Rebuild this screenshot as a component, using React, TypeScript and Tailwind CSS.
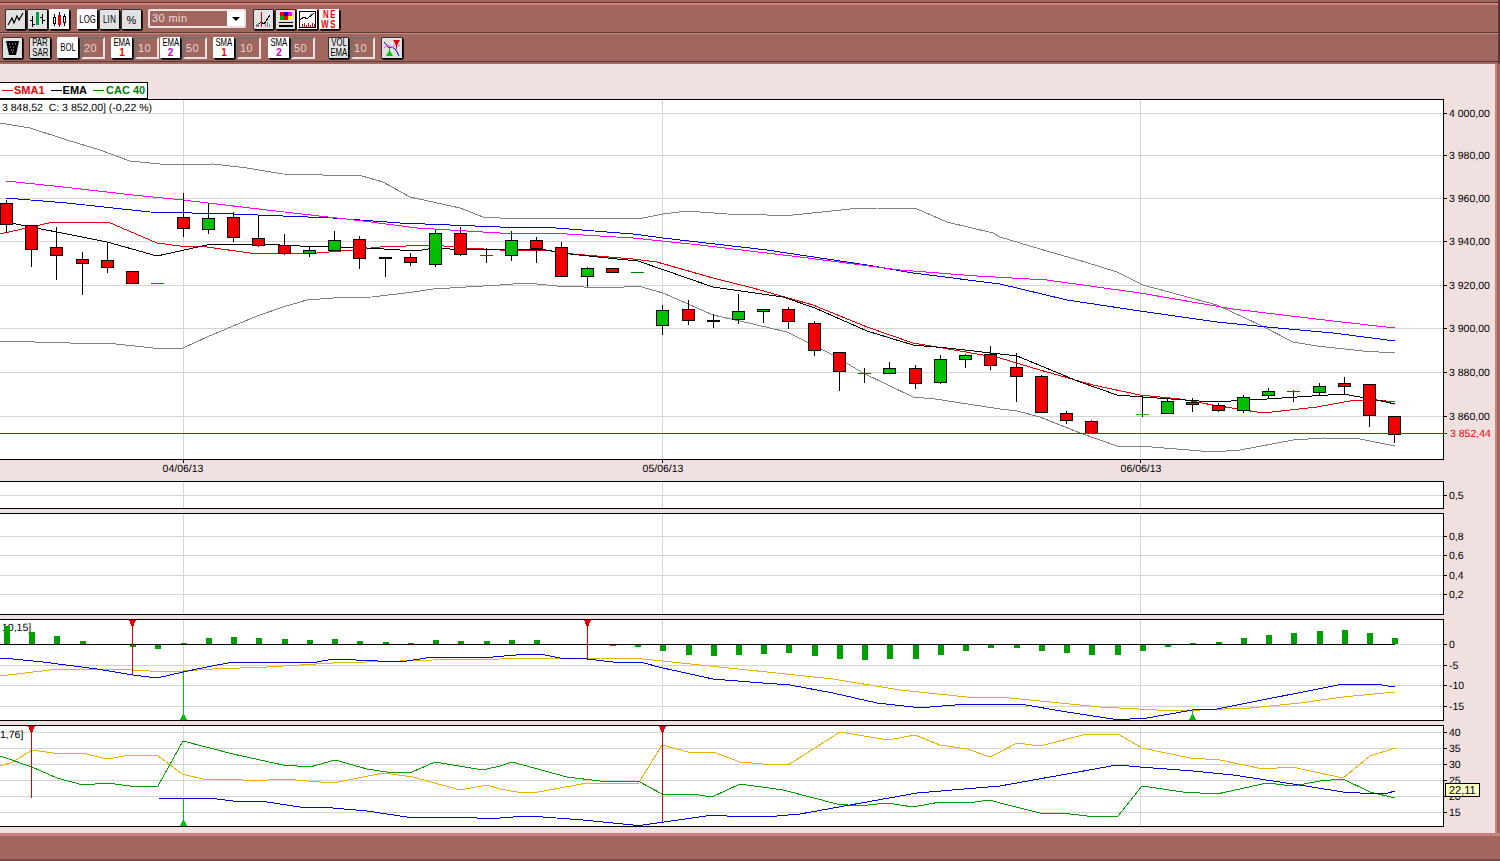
import type { ReactNode } from 'react'

type Pt = [number, number]
// x, wick top, body top, body bottom, wick bottom, colour
type Candle = [number, number, number, number, number, 'r' | 'g']
// x, wick top, level, wick bottom, colour, thickness
type Dash = [number, number, number, number, string, number]

const RED = '#f00000'
const GREEN = '#00c000'
const GRID = '#d4d4d4'
const GRAY = '#808080'
const BLUE = '#0000e0'
const MAGENTA = '#ff00ff'
const ORANGE = '#f0b000'
const DKGREEN = '#00a000'
const FS = 10.5

const candles: Candle[] = [
  [6, 200, 203, 224, 233, 'r'], [31, 225, 225, 249, 267, 'r'], [56, 227, 247, 255, 280, 'r'], [82, 252, 259, 263, 295, 'r'],
  [107, 242, 260, 267, 273, 'r'], [132, 271, 271, 283, 283, 'r'], [183, 193, 217, 228, 237, 'r'], [208, 203, 218, 229, 234, 'g'],
  [233, 212, 217, 237, 242, 'r'], [258, 215, 238, 245, 247, 'r'], [284, 234, 245, 253, 255, 'r'], [309, 247, 250, 253, 257, 'g'],
  [334, 231, 240, 250, 250, 'g'], [359, 236, 239, 258, 269, 'r'], [410, 253, 257, 262, 266, 'r'], [435, 230, 233, 264, 267, 'g'],
  [460, 227, 233, 254, 256, 'r'], [511, 231, 240, 255, 261, 'g'], [536, 237, 240, 248, 263, 'r'], [561, 242, 247, 276, 276, 'r'],
  [587, 267, 268, 276, 287, 'g'], [612, 268, 268, 272, 272, 'r'], [662, 305, 310, 325, 335, 'g'], [688, 300, 309, 320, 325, 'r'],
  [738, 294, 311, 319, 324, 'g'], [763, 309, 309, 311, 323, 'g'], [788, 307, 309, 321, 329, 'r'], [814, 321, 323, 350, 356, 'r'],
  [839, 352, 352, 371, 391, 'r'], [889, 362, 368, 373, 373, 'g'], [915, 365, 368, 383, 389, 'r'], [940, 355, 359, 382, 384, 'g'],
  [965, 354, 355, 359, 368, 'g'], [990, 346, 354, 365, 370, 'r'], [1016, 353, 367, 376, 402, 'r'], [1041, 375, 376, 412, 412, 'r'],
  [1066, 411, 413, 420, 424, 'r'], [1091, 420, 421, 433, 433, 'r'], [1167, 398, 401, 413, 413, 'g'], [1192, 398, 402, 404, 412, 'r'],
  [1218, 403, 405, 410, 412, 'r'], [1243, 395, 397, 410, 413, 'g'], [1268, 388, 391, 395, 398, 'g'], [1319, 383, 386, 392, 396, 'g'],
  [1344, 377, 383, 386, 395, 'r'], [1369, 384, 384, 415, 427, 'r'], [1394, 416, 416, 434, 443, 'r'],
]

const dashes: Dash[] = [
  [157, 283, 283, 283, '#008000', 1], [385, 257, 257, 277, '#000000', 2], [486, 248, 255, 263, '#e00000', 1],
  [637, 272, 272, 272, '#008000', 1], [713, 314, 320, 328, '#000000', 2], [864, 368, 373, 383, '#e00000', 1],
  [1117, 433, 433, 433, '#008000', 1], [1142, 397, 414, 417, GREEN, 1], [1293, 390, 391, 402, '#e00000', 1],
]

const bollUp: Pt[] = [[0, 123], [30, 128], [67, 140], [100, 150], [130, 161], [170, 165], [213, 164], [247, 168], [283, 174], [362, 176], [383, 182], [410, 197], [460, 208], [483, 217], [500, 218], [550, 218], [627, 219], [643, 218], [663, 214], [687, 211], [727, 214], [767, 215], [793, 215], [860, 208], [877, 208], [917, 209], [947, 222], [993, 233], [1000, 237], [1040, 249], [1085, 262], [1117, 272], [1133, 280], [1143, 285], [1217, 305], [1260, 325], [1293, 342], [1317, 346], [1363, 351], [1395, 353]]
const bollLo: Pt[] = [[0, 341], [70, 343], [107, 343], [153, 348], [183, 348], [207, 337], [257, 316], [283, 307], [307, 300], [333, 298], [372, 297], [413, 292], [433, 289], [500, 285], [527, 283], [557, 286], [610, 288], [638, 286], [663, 293], [713, 315], [740, 321], [787, 332], [833, 355], [863, 373], [913, 397], [935, 399], [1000, 409], [1017, 411], [1040, 417], [1080, 433], [1117, 446], [1140, 446], [1213, 452], [1240, 450], [1293, 440], [1323, 438], [1360, 439], [1395, 446]]
const sma2: Pt[] = [[6, 198], [67, 203], [150, 212], [233, 214], [333, 218], [400, 223], [500, 227], [543, 227], [633, 234], [663, 238], [767, 250], [867, 265], [913, 273], [1000, 284], [1067, 300], [1140, 311], [1217, 322], [1267, 327], [1333, 333], [1395, 341]]
const ema2: Pt[] = [[6, 181], [63, 187], [133, 195], [183, 200], [267, 210], [363, 221], [417, 228], [500, 233], [550, 233], [633, 238], [700, 245], [800, 257], [900, 270], [977, 276], [1047, 280], [1140, 293], [1233, 309], [1333, 321], [1395, 328]]
const sma1: Pt[] = [[0, 234], [53, 222], [108, 222], [157, 243], [180, 246], [207, 247], [250, 253], [317, 253], [353, 250], [380, 247], [433, 245], [467, 248], [500, 250], [543, 250], [573, 254], [633, 259], [657, 262], [713, 278], [753, 288], [813, 305], [867, 327], [913, 343], [937, 347], [1000, 358], [1040, 370], [1093, 385], [1140, 395], [1180, 399], [1213, 405], [1263, 413], [1317, 407], [1350, 401], [1377, 400], [1395, 402]]
const ema1: Pt[] = [[6, 222], [107, 242], [157, 256], [207, 245], [260, 244], [300, 246], [367, 248], [417, 251], [433, 248], [467, 250], [500, 249], [540, 249], [570, 254], [617, 259], [638, 261], [713, 287], [783, 297], [815, 308], [867, 331], [913, 345], [947, 348], [1000, 354], [1017, 356], [1080, 382], [1117, 395], [1143, 397], [1213, 402], [1267, 399], [1343, 394], [1377, 400], [1395, 404]]

const hist: Pt[] = [[7, 626], [32, 632], [57, 636], [83, 641], [133, 647], [158, 649], [184, 643], [209, 638], [234, 637], [259, 638], [285, 639], [310, 640], [335, 639], [360, 641], [386, 642], [411, 643], [436, 640], [461, 641], [487, 641], [512, 640], [537, 640], [613, 646], [638, 647], [663, 651], [689, 655], [714, 656], [739, 655], [764, 654], [789, 653], [815, 656], [840, 659], [865, 660], [890, 659], [916, 659], [941, 655], [966, 651], [991, 648], [1017, 648], [1042, 651], [1067, 653], [1092, 655], [1118, 655], [1143, 651], [1168, 647], [1193, 643], [1219, 642], [1244, 638], [1269, 635], [1294, 633], [1320, 631], [1345, 630], [1370, 633], [1395, 638]]
const macd: Pt[] = [[0, 658], [13, 659], [43, 662], [97, 669], [133, 675], [157, 678], [183, 672], [207, 667], [233, 662], [317, 662], [333, 659], [400, 662], [433, 657], [493, 657], [527, 654], [540, 654], [560, 658], [587, 659], [613, 662], [640, 662], [663, 668], [713, 679], [750, 682], [790, 685], [833, 693], [877, 703], [913, 707], [930, 707], [967, 704], [1020, 704], [1067, 712], [1113, 719], [1130, 719], [1147, 718], [1193, 710], [1217, 709], [1343, 684], [1375, 684], [1395, 687]]
const macdSig: Pt[] = [[0, 676], [50, 670], [80, 669], [133, 670], [167, 672], [183, 671], [213, 669], [267, 667], [333, 663], [400, 661], [433, 660], [500, 659], [523, 658], [600, 658], [643, 659], [700, 665], [767, 672], [833, 679], [900, 690], [967, 697], [1000, 697], [1040, 701], [1100, 707], [1157, 710], [1200, 710], [1250, 708], [1300, 703], [1343, 697], [1395, 692]]

const adxGreen: Pt[] = [[0, 756], [32, 767], [57, 778], [83, 785], [107, 783], [130, 786], [158, 786], [183, 741], [233, 754], [283, 765], [310, 767], [335, 760], [367, 769], [387, 772], [412, 772], [435, 762], [483, 770], [500, 766], [512, 762], [567, 777], [600, 781], [638, 781], [662, 794], [692, 794], [712, 797], [740, 784], [783, 790], [837, 804], [858, 806], [887, 803], [913, 807], [940, 802], [967, 803], [990, 800], [1000, 803], [1040, 813], [1070, 814], [1087, 816], [1118, 816], [1142, 786], [1183, 792], [1217, 794], [1267, 783], [1293, 786], [1320, 781], [1343, 779], [1370, 792], [1395, 798]]
const adxOrange: Pt[] = [[0, 766], [13, 762], [32, 750], [53, 753], [83, 753], [107, 759], [130, 755], [157, 755], [182, 774], [207, 780], [233, 779], [253, 781], [283, 779], [333, 783], [383, 773], [413, 777], [460, 790], [487, 785], [500, 789], [517, 792], [533, 793], [587, 783], [638, 784], [662, 745], [688, 752], [713, 752], [740, 762], [763, 764], [788, 765], [840, 732], [888, 740], [915, 735], [940, 745], [967, 749], [990, 757], [1000, 752], [1017, 743], [1040, 746], [1087, 734], [1118, 734], [1142, 748], [1190, 758], [1220, 760], [1263, 769], [1292, 767], [1343, 778], [1370, 756], [1395, 748]]
const adxBlue: Pt[] = [[158, 798], [217, 799], [233, 801], [267, 802], [300, 807], [333, 808], [367, 811], [407, 817], [473, 817], [477, 818], [500, 818], [527, 816], [543, 817], [583, 820], [633, 825], [643, 825], [713, 815], [727, 816], [777, 816], [800, 814], [850, 805], [917, 793], [1000, 786], [1117, 765], [1140, 767], [1193, 771], [1233, 775], [1293, 784], [1343, 792], [1360, 793], [1388, 793], [1395, 791]]

const VGRID = [183, 662, 1140]

function Line({ pts, color }: { pts: Pt[]; color: string }) {
  return <polyline points={pts.map((p) => p.join(',')).join(' ')} fill="none" stroke={color} strokeWidth={1} />
}

function Grid({ rows, top, bottom }: { rows: number[]; top: number; bottom: number }) {
  return (
    <>
      {rows.map((y) => <rect key={y} x={0} y={y} width={1443} height={1} fill={GRID} />)}
      {VGRID.map((x) => <rect key={x} x={x} y={top} width={1} height={bottom - top} fill={GRID} />)}
    </>
  )
}

function Axis({ ticks }: { ticks: [number, string][] }) {
  return (
    <>
      {ticks.map(([y, label]) => (
        <g key={label}>
          <rect x={1443} y={y} width={4} height={1} fill="#000" />
          <text x={1449} y={y + 4} fontSize={FS} fill="#000" textRendering="geometricPrecision">{label}</text>
        </g>
      ))}
    </>
  )
}

function DownSignal({ x, top, to }: { x: number; top: number; to: number }) {
  return (
    <>
      <rect x={x} y={top} width={1} height={to - top} fill="#e00000" />
      <polygon points={`${x - 3},${top} ${x + 4},${top} ${x + 1},${top + 7} ${x},${top + 7}`} fill="#e00000" />
    </>
  )
}

function UpSignal({ x, bottom, to }: { x: number; bottom: number; to: number }) {
  return (
    <>
      <rect x={x} y={to} width={1} height={bottom - to} fill={GREEN} />
      <polygon points={`${x - 3},${bottom} ${x + 4},${bottom} ${x + 1},${bottom - 6} ${x},${bottom - 6}`} fill={GREEN} />
    </>
  )
}

function Panel({ top, height, children, className }: { top: number; height: number; children: ReactNode; className?: string }) {
  return (
    <div className={`h-[var(--h)] w-[1444px] border-y border-r border-black bg-white ${className ?? ''}`} style={{ '--h': `${height}px` } as React.CSSProperties}>
      <svg width={1443} height={height - 2} viewBox={`0 ${top + 1} 1443 ${height - 2}`} shapeRendering="crispEdges" className="block overflow-visible">
        {children}
      </svg>
    </div>
  )
}

function Btn({ w, white, className, children }: { w: string; white?: boolean; className?: string; children: ReactNode }) {
  return (
    <div className={`flex shrink-0 flex-col items-center justify-center rounded-[2px] border border-r-black border-b-black text-center text-[10px] leading-[10px] text-black shadow-[1px_1px_0_#2a1816] ${white ? 'border-t-white border-l-white bg-white' : 'border-t-[#333] border-l-[#333] bg-[#e2e2e2]'} ${w} ${className ?? ''}`}>
      {children}
    </div>
  )
}

// the toolbar captions are a narrow bitmap face, so squeeze the letters
function Cap({ children, className }: { children: ReactNode; className?: string }) {
  return <span className={`block scale-x-[0.78] whitespace-nowrap ${className ?? ''}`}>{children}</span>
}

function NumBox({ value, className }: { value: string; className?: string }) {
  return (
    <div className={`flex h-[22px] w-[24px] shrink-0 items-center border-2 border-t-[#707070] border-l-[#707070] border-r-[#e8e0e0] border-b-[#e8e0e0] pl-[1px] text-[11px] tracking-[0.5px] text-[#e4d2d2] ${className ?? ''}`}>
      {value}
    </div>
  )
}

function MaBtn({ name, n, color, w, className }: { name: string; n: string; color: string; w: string; className?: string }) {
  return (
    <Btn w={`${w} h-[22px]`} white className={className}>
      <Cap>{name}</Cap>
      <span className={`font-bold ${color}`}>{n}</span>
    </Btn>
  )
}

function Toolbar() {
  return (
    <header className="h-[64px] shrink-0 border-r-2 border-r-[#5c3a35] bg-[#a1675f]">
      <div className="h-[2px] bg-[#a1675f]" />
      <div className="h-[1px] bg-[#5c3a35]" />
      <div className="h-[2px] bg-[#d98077]" />
      <div className="flex h-[27px] items-start pt-[4px]">
        <Btn w="ml-[5px] w-[21px] h-[21px]">
          <svg width="17" height="15" viewBox="0 0 17 15"><path d="M1 13 5 6 7 11 10 4 12 8 16 1" fill="none" stroke="#000" strokeWidth="1.2" /></svg>
        </Btn>
        <Btn w="ml-[1px] w-[21px] h-[21px]">
          <svg width="17" height="17" viewBox="0 0 17 17" shapeRendering="crispEdges">
            <path d="M3.5 5v11M1 9h3M3.5 13H6M13.5 3v10M11 6h3M13.5 9H16" fill="none" stroke="#000" />
            <path d="M8.5 1v13" stroke="#00a040" strokeWidth="3" />
          </svg>
        </Btn>
        <Btn w="ml-[1px] w-[21px] h-[21px]" white>
          <svg width="17" height="17" viewBox="0 0 17 17" shapeRendering="crispEdges">
            <path d="M3.5 3v12M13.5 3v12" stroke="#000" />
            <rect x="2.5" y="6.5" width="2" height="6" fill="#fff" stroke="#000" />
            <rect x="12.5" y="5.5" width="2" height="6" fill="#fff" stroke="#000" />
            <path d="M8.5 1v15" stroke="#000" />
            <rect x="7" y="4" width="3" height="10" fill="#f00000" />
          </svg>
        </Btn>
        <Btn w="ml-[7px] w-[21px] h-[21px]" white><Cap>LOG</Cap></Btn>
        <Btn w="ml-[1px] w-[21px] h-[21px] tracking-[0.5px]"><Cap>LIN</Cap></Btn>
        <Btn w="ml-[1px] w-[21px] h-[21px] text-[11px]">%</Btn>
        <div className="ml-[6px] flex h-[19px] w-[98px] shrink-0 items-center rounded-[2px] border-2 border-[#efe2e2] pl-[2px] text-[11px] tracking-[0.4px] text-[#ecdcdc]">
          <span className="flex-1">30 min</span>
          <span className="flex h-full w-[17px] items-center justify-center bg-white">
            <svg width="8" height="4" viewBox="0 0 8 4"><polygon points="0,0 8,0 4,4" fill="#000" /></svg>
          </span>
        </div>
        <Btn w="ml-[7px] w-[21px] h-[21px]">
          <svg width="17" height="17" viewBox="0 0 17 17" shapeRendering="crispEdges">
            <path d="M2 15 6 11 9 13 15 4" fill="none" stroke="#000" />
            <path d="M1 16v-3M3 16v-4M10 16v-4M12 16v-5M14 16v-3" stroke="#808080" />
            <rect x="6" y="1" width="1" height="15" fill="#e00000" />
          </svg>
        </Btn>
        <Btn w="ml-[1px] w-[21px] h-[21px]">
          <svg width="17" height="17" viewBox="0 0 17 17" shapeRendering="crispEdges">
            <rect x="3" y="1" width="4" height="4" fill="#f00000" />
            <rect x="7" y="1" width="4" height="4" fill="#0000f0" />
            <rect x="11" y="1" width="4" height="4" fill="#ff00ff" />
            <rect x="3" y="5" width="4" height="4" fill="#00a000" />
            <rect x="7" y="5" width="4" height="4" fill="#f00000" />
            <rect x="11" y="5" width="4" height="4" fill="#ffff00" />
            <rect x="2" y="11" width="14" height="1" fill="#000" />
            <rect x="2" y="14" width="14" height="2" fill="#000" />
          </svg>
        </Btn>
        <Btn w="ml-[1px] w-[21px] h-[21px]" white>
          <svg width="17" height="17" viewBox="0 0 17 17" shapeRendering="crispEdges">
            <path d="M1 9 5 6 8 8 15 2" fill="none" stroke="#000" />
            <rect x="0.5" y="0.5" width="16" height="16" fill="none" stroke="#000" />
            <path d="M3 16v-3M5 16v-4M7 16v-2M9 16v-4M11 16v-2M13 16v-4M15 16v-3" stroke="#e00000" />
          </svg>
        </Btn>
        <Btn w="ml-[1px] w-[21px] h-[21px]" white className="font-bold">
          <Cap className="tracking-[2px] text-[#f00000]">NE</Cap>
          <Cap className="tracking-[2px] text-[#f00000]">WS</Cap>
        </Btn>
      </div>
      <div className="h-[1px] bg-[#5c3a35]" />
      <div className="h-[1px] bg-[#c98a82]" />
      <div className="flex h-[27px] items-start pt-[3px]">
        <Btn w="ml-[2px] w-[21px] h-[22px]">
          <svg width="15" height="16" viewBox="0 0 15 16"><polygon points="1,1 14,1 11,15 4,15" fill="#000" /><path d="M4 4h1M7 4h1M10 4h1M5 7h1M8 7h1M6 10h1M8 10h1M7 12h1" stroke="#d0d0d0" /></svg>
        </Btn>
        <Btn w="ml-[6px] w-[22px] h-[22px]"><Cap>PAR</Cap><Cap>SAR</Cap></Btn>
        <Btn w="ml-[6px] w-[22px] h-[22px]" white><Cap>BOL</Cap></Btn>
        <NumBox value="20" className="ml-[2px]" />
        <MaBtn name="EMA" n="1" color="text-[#f00000]" w="w-[22px]" className="ml-[6px]" />
        <NumBox value="10" className="ml-[2px]" />
        <MaBtn name="EMA" n="2" color="text-[#c000c0]" w="w-[21px]" className="ml-[1px]" />
        <NumBox value="50" className="ml-[2px]" />
        <MaBtn name="SMA" n="1" color="text-[#f00000]" w="w-[22px]" className="ml-[6px]" />
        <NumBox value="10" className="ml-[2px]" />
        <MaBtn name="SMA" n="2" color="text-[#c000c0]" w="w-[22px]" className="ml-[7px]" />
        <NumBox value="50" className="ml-[1px]" />
        <Btn w="ml-[13px] w-[21px] h-[22px]"><Cap>VOL</Cap><Cap>EMA</Cap></Btn>
        <NumBox value="10" className="ml-[2px]" />
        <Btn w="ml-[6px] w-[22px] h-[22px]">
          <svg width="18" height="18" viewBox="0 0 18 18">
            <path d="M1 3 6 9 9 8 13 11 16 17" fill="none" stroke="#0000e0" />
            <path d="M1 9 5 6 9 9 13 5 17 7" fill="none" stroke="#ff40c0" />
            <polygon points="10,1 17,1 14,6 13,6" fill="#e00000" />
            <rect x="13" y="6" width="1" height="4" fill="#e00000" />
            <polygon points="3,17 10,17 7,12 6,12" fill={GREEN} />
            <rect x="6" y="8" width="1" height="4" fill={GREEN} />
          </svg>
        </Btn>
      </div>
      <div className="h-[1px] bg-[#5c3a35]" />
      <div className="h-[2px] bg-[#a1675f]" />
    </header>
  )
}

function PriceChart() {
  return (
    <Panel top={99} height={361}>
      <Grid rows={[113, 155, 198, 241, 285, 328, 372, 416]} top={100} bottom={459} />
      <Line pts={bollUp} color={GRAY} />
      <Line pts={bollLo} color={GRAY} />
      <Line pts={sma2} color={BLUE} />
      <Line pts={ema2} color={MAGENTA} />
      <Line pts={sma1} color="#e80000" />
      <Line pts={ema1} color="#000000" />
      {candles.map(([x, hi, top, bot, lo, c]) => (
        <g key={x}>
          <rect x={x} y={hi} width={1} height={lo - hi} fill="#000" />
          <rect x={x - 6} y={top} width={12} height={bot - top} fill={c === 'r' ? RED : GREEN} stroke="#000" />
        </g>
      ))}
      {dashes.map(([x, hi, y, lo, color, t]) => (
        <g key={x}>
          <rect x={x} y={hi} width={1} height={lo - hi} fill="#000" />
          <rect x={x - 6} y={y} width={13} height={t} fill={color} />
        </g>
      ))}
      <rect x={0} y={433} width={1443} height={1} fill="#d80000" />
      <text x={2} y={111} fontSize={FS} fill="#000" xmlSpace="preserve" textRendering="geometricPrecision">3 848,52  C: 3 852,00] (-0,22 %)</text>
      <Axis ticks={[[113, '4 000,00'], [155, '3 980,00'], [198, '3 960,00'], [241, '3 940,00'], [285, '3 920,00'], [328, '3 900,00'], [372, '3 880,00'], [416, '3 860,00']]} />
      <rect x={1443} y={433} width={4} height={1} fill="#d80000" />
      <text x={1450} y={437} fontSize={FS} fill="#f00000" textRendering="geometricPrecision">3 852,44</text>
      {VGRID.map((x) => <rect key={x} x={x} y={459} width={1} height={4} fill="#000" />)}
      <text x={183} y={472} fontSize={FS} fill="#000" textAnchor="middle" textRendering="geometricPrecision">04/06/13</text>
      <text x={663} y={472} fontSize={FS} fill="#000" textAnchor="middle" textRendering="geometricPrecision">05/06/13</text>
      <text x={1141} y={472} fontSize={FS} fill="#000" textAnchor="middle" textRendering="geometricPrecision">06/06/13</text>
    </Panel>
  )
}

function MacdChart() {
  return (
    <Panel top={619} height={102} className="mt-[4px]">
      <Grid rows={[665, 685, 706]} top={620} bottom={720} />
      <rect x={1395} y={644} width={48} height={1} fill={GRID} />
      <text x={2} y={631} fontSize={FS} fill="#000" textRendering="geometricPrecision">10,15]</text>
      {hist.map(([x, y]) => (
        <rect key={x} x={x - 3} y={Math.min(y, 644)} width={6} height={Math.abs(y - 644)} fill={DKGREEN} />
      ))}
      <rect x={0} y={644} width={1395} height={1} fill="#000" />
      <Line pts={macdSig} color={ORANGE} />
      <Line pts={macd} color={BLUE} />
      <DownSignal x={132} top={620} to={675} />
      <DownSignal x={587} top={620} to={659} />
      <UpSignal x={183} bottom={720} to={672} />
      <UpSignal x={1192} bottom={720} to={709} />
      <Axis ticks={[[644, '0'], [665, '-5'], [685, '-10'], [706, '-15']]} />
    </Panel>
  )
}

function AdxChart() {
  return (
    <Panel top={725} height={102} className="mt-[4px]">
      <Grid rows={[732, 748, 764, 780, 796, 812]} top={726} bottom={826} />
      <Line pts={adxOrange} color={ORANGE} />
      <Line pts={adxGreen} color={DKGREEN} />
      <Line pts={adxBlue} color={BLUE} />
      <DownSignal x={31} top={726} to={798} />
      <DownSignal x={662} top={726} to={822} />
      <UpSignal x={183} bottom={826} to={798} />
      <text x={0} y={738} fontSize={FS} fill="#000" textRendering="geometricPrecision">1,76]</text>
      <Axis ticks={[[732, '40'], [748, '35'], [764, '30'], [780, '25'], [796, '20'], [812, '15']]} />
    </Panel>
  )
}

export default function App() {
  return (
    <div className="relative flex h-[861px] w-[1500px] flex-col overflow-hidden bg-[#f0e0e0] font-['Liberation_Sans',Arial,sans-serif]">
      <Toolbar />
      <div className="flex min-h-0 flex-1">
        <main className="min-w-0 flex-1 pt-[18px]">
          <div className="flex h-[17px] w-[148px] items-center gap-[6px] border-y border-r border-black bg-white pl-[2px] text-[11px] leading-none font-bold">
            <span className="flex items-center text-[#f00000]"><i className="mr-[1px] h-[1px] w-[11px] bg-[#f00000]" />SMA1</span>
            <span className="flex items-center text-black"><i className="mr-[1px] h-[1px] w-[11px] bg-black" />EMA</span>
            <span className="flex items-center text-[#008000]"><i className="mr-[2px] h-[1px] w-[11px] bg-[#008000]" />CAC 40</span>
          </div>
          <PriceChart />
          <div className="h-[21px]" />
          <Panel top={481} height={28}>
            <Grid rows={[495]} top={482} bottom={508} />
            <Axis ticks={[[495, '0,5']]} />
          </Panel>
          <Panel top={513} height={102} className="mt-[4px]">
            <Grid rows={[536, 555, 575, 594]} top={514} bottom={614} />
            <Axis ticks={[[536, '0,8'], [555, '0,6'], [575, '0,4'], [594, '0,2']]} />
          </Panel>
          <MacdChart />
          <AdxChart />
        </main>
        <div className="w-[5px] shrink-0 border-l-2 border-l-[#c9837a] bg-[#a1675f]" />
      </div>
      <footer className="h-[28px] shrink-0 border-t-3 border-t-[#c9837a] border-b-2 border-b-[#7a4a44] bg-[#a1675f]" />
      <div className="absolute top-[783px] left-[1445px] border border-black bg-[#ffffc8] px-[3px] text-[11px] leading-[12px] text-black">22,11</div>
    </div>
  )
}
